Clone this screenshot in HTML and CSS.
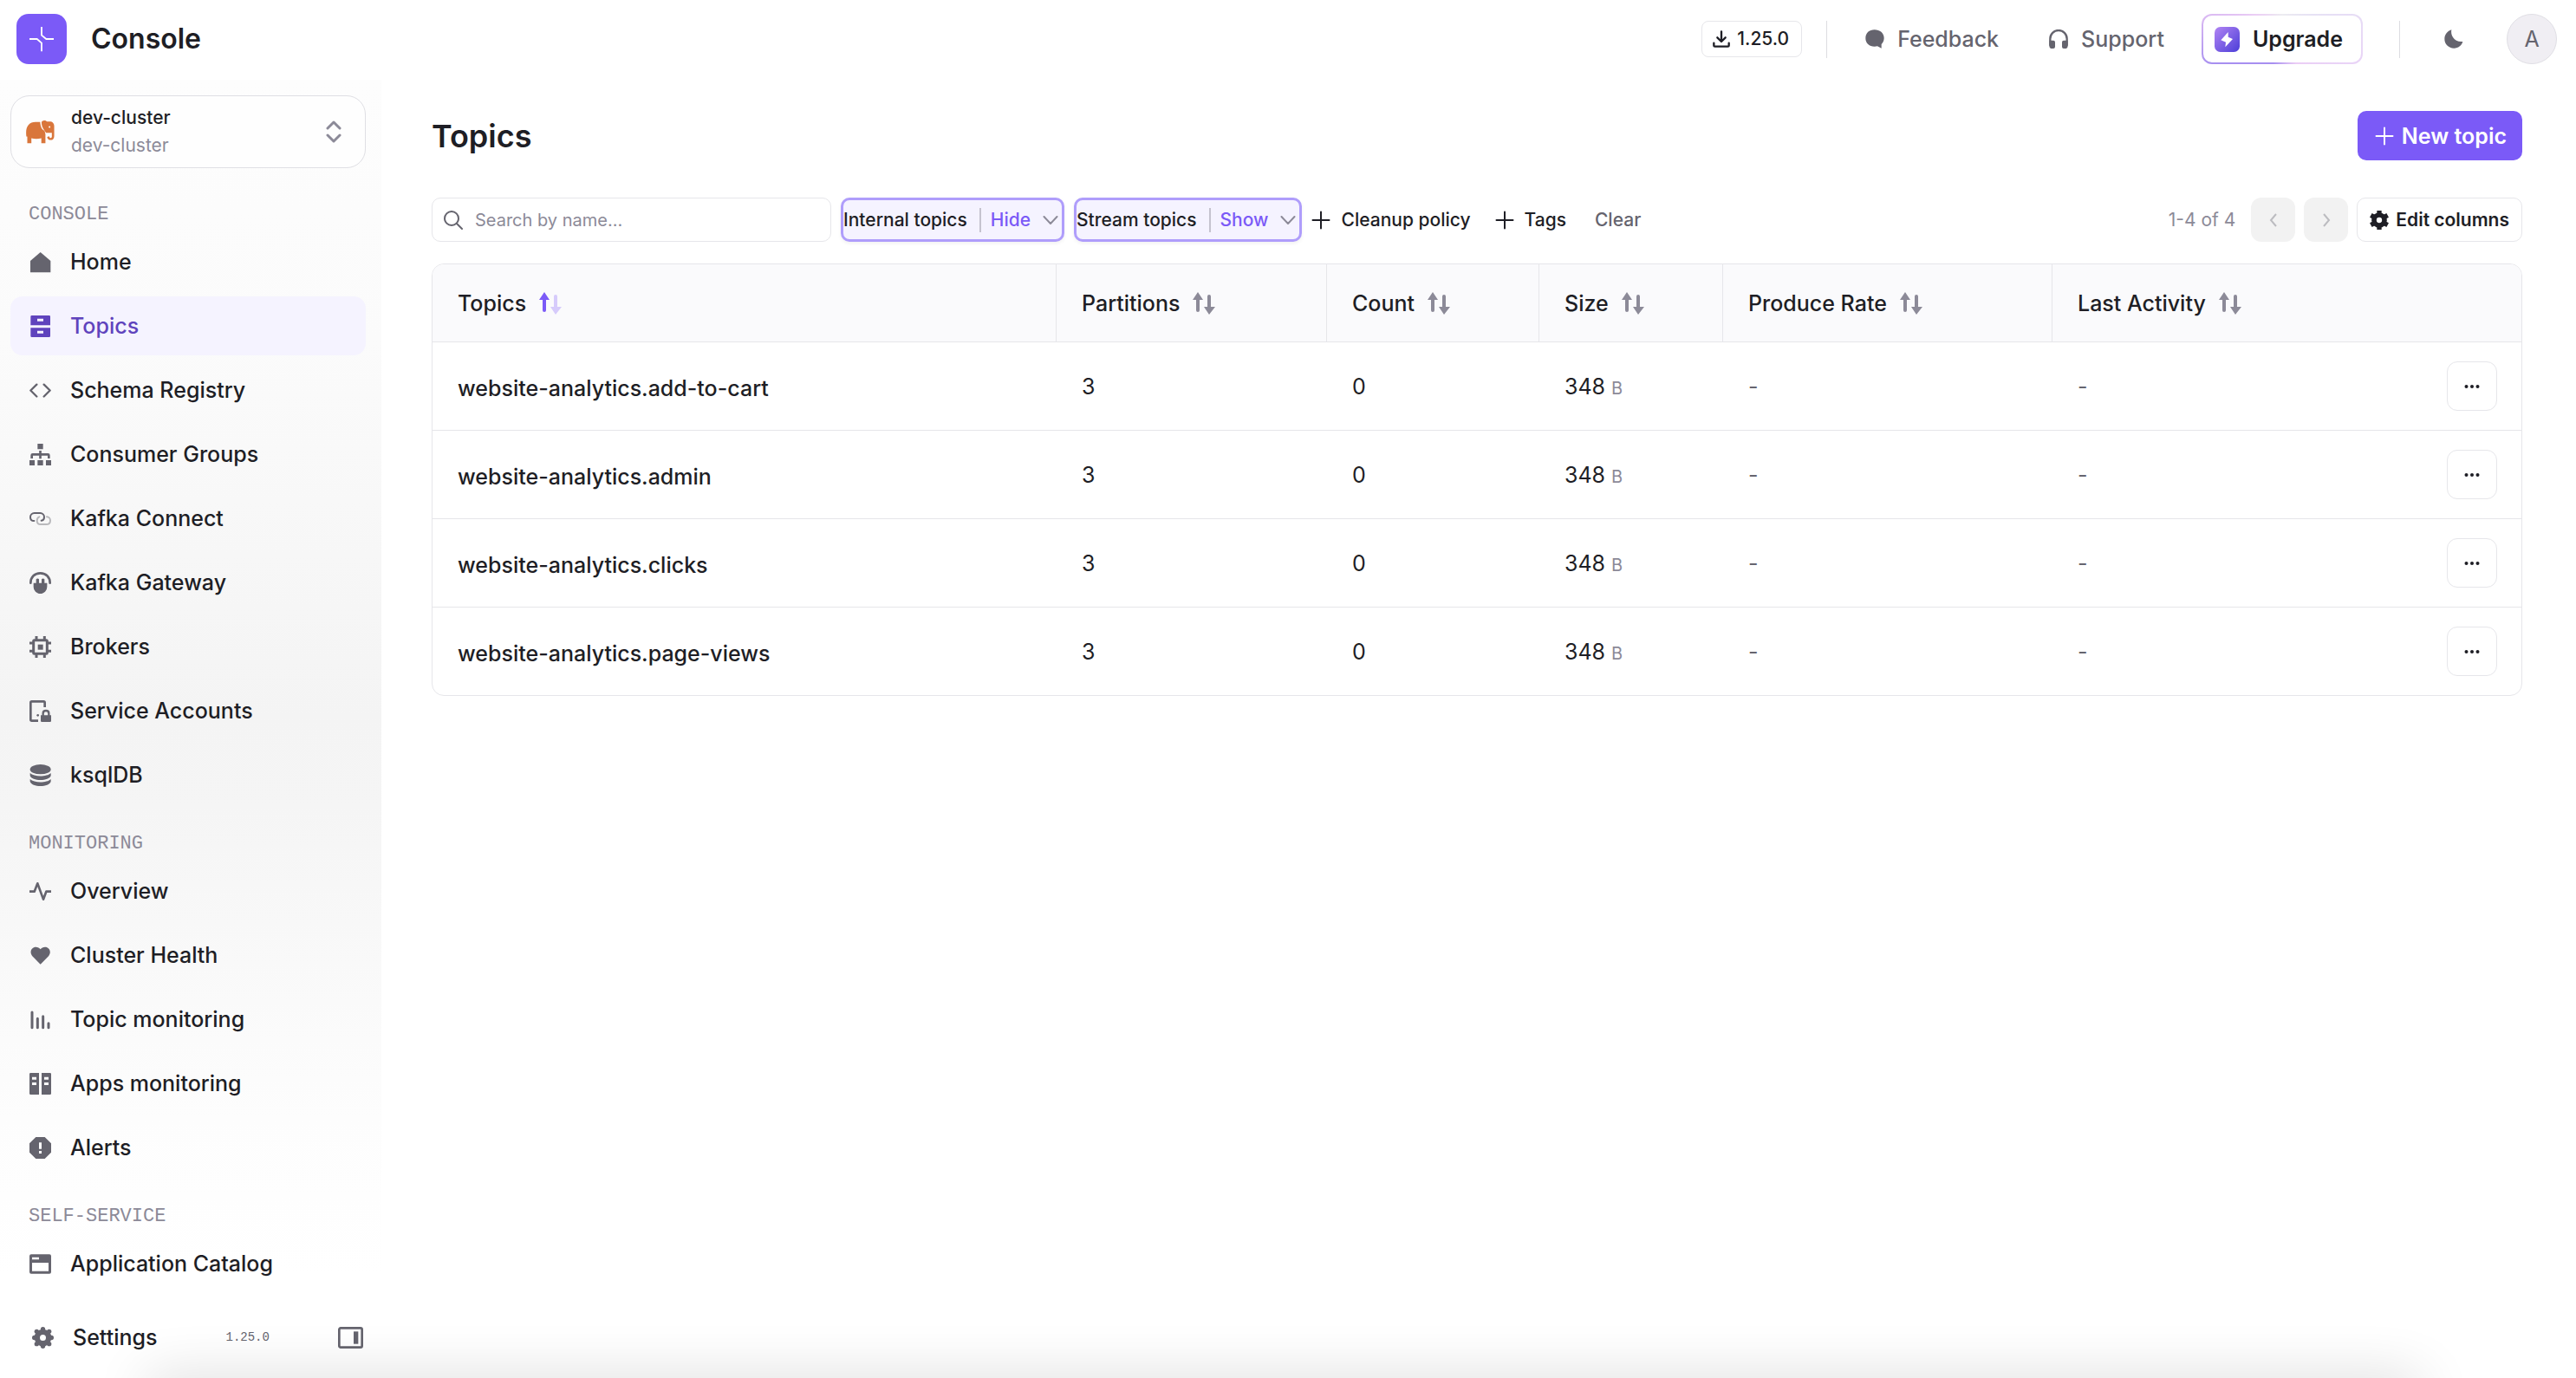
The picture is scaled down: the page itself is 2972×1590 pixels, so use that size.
FILE: index.html
```
<!DOCTYPE html>
<html lang="en">
<head>
<meta charset="utf-8">
<meta name="viewport" content="width=device-width, initial-scale=1">
<title>Topics - Console</title>
<link rel="stylesheet" href="styles.css">
</head>
<body>
<svg class="sprite" aria-hidden="true">
  <symbol id="sort" viewBox="0 0 26 26">
    <path class="sort-up" d="M6 0 L12 9 H8 V21 a2 2 0 0 1-4 0 V9 H0 Z"/>
    <path class="sort-down" d="M19 26 L13 17 H17 V5 a2 2 0 0 1 4 0 V17 H26 Z"/>
  </symbol>
  <symbol id="plus" viewBox="0 0 22 22"><path d="M11 1.500v19M1.500 11h19" fill="none" stroke="currentColor" stroke-width="2" stroke-linecap="round"/></symbol>
  <symbol id="chevron" viewBox="0 0 18 12"><path d="M1.500 2 9 10l7.500-8" fill="none" stroke="currentColor" stroke-width="2" stroke-linecap="round" stroke-linejoin="round"/></symbol>
  <symbol id="dots" viewBox="0 0 18 6"><circle cx="2.500" cy="3" r="2"/><circle cx="9" cy="3" r="2"/><circle cx="15.500" cy="3" r="2"/></symbol>
</svg>

<header class="topbar">
  <a class="brand" href="#">
    <svg class="logo" viewBox="0 0 174 174" aria-hidden="true"><rect width="174" height="174" rx="42" fill="#7b5af7"/><path d="M87 45v29l16 13h26M45 87h26l16 14v29" fill="none" stroke="#fff" stroke-width="5.500"/></svg>
    <span class="brand-name">Console</span>
  </a>
  <div class="topbar-actions">
    <button class="version-button" type="button"><svg class="icon-20" viewBox="0 0 60 60" aria-hidden="true"><path d="M30 4v34M16 25l14 14 14-14M4 44v8q0 4 4 4h44q4 0 4-4v-8" fill="none" stroke="currentColor" stroke-width="7" stroke-linecap="round" stroke-linejoin="round"/></svg>1.25.0</button>
    <span class="divider"></span>
    <nav class="help">
      <a class="help-link" href="#"><svg class="icon-22" viewBox="0 0 66 66" aria-hidden="true"><path d="M32 1C50 1 65 12 65 30c0 10-5 17-9 21v14L42 58c-3 1-6 1-10 1C14 59 1 48 1 30S14 1 32 1z"/></svg>Feedback</a>
      <a class="help-link" href="#"><svg class="icon-22" viewBox="0 0 66 66" aria-hidden="true"><path d="M4 56V32a29 29 0 0 1 58 0v24" fill="none" stroke="currentColor" stroke-width="7"/><path d="M1 38h14q6 0 6 6v16q0 6-6 6h-4Q1 66 1 56zM65 38H51q-6 0-6 6v16q0 6 6 6h4q10 0 10-10z"/></svg>Support</a>
    </nav>
    <button class="upgrade" type="button"><svg class="icon-29" viewBox="0 0 87 87" aria-hidden="true"><defs><linearGradient id="bolt" x1="0" y1="0" x2="1" y2="1"><stop offset="0" stop-color="#b184f3"/><stop offset="1" stop-color="#4c3ed8"/></linearGradient></defs><rect width="87" height="87" rx="20" fill="url(#bolt)"/><path d="M47 18 22 46l17 7-2 17 26-28-16-7z" fill="#fff"/></svg>Upgrade</button>
    <span class="divider"></span>
    <button class="theme" type="button" aria-label="Dark mode"><svg class="icon-22" viewBox="0 0 66 66" aria-hidden="true"><path d="M25 1C21 20 34 45 64 42 60 56 48 65 34 65 15 65 1 51 1 33 1 18 11 5 25 1z"/></svg></button>
    <button class="avatar" type="button">A</button>
  </div>
</header>

<div class="shell">
  <aside class="sidebar">
    <button class="cluster" type="button">
      <svg class="elephant" viewBox="0 0 97 80" aria-hidden="true"><path fill="#d9763b" d="M0 42C0 18 12 5 32 5h16c1 14 5 27 15 30l3 12v31H52V61c-10 3-24 3-34 0v17H4V54q-4 6-4-12z"/><path fill="#d9763b" d="M53 5c3-6 14-7 18-1h10c9 0 15 6 15 15v34c0 9-5 14-12 14s-12-5-12-11l7-2c1 4 3 6 5 6s4-2 4-5V42H68L62 33C56 26 52 16 53 5z"/><circle cx="80" cy="22" r="3" fill="#fff"/></svg>
      <span class="cluster-text"><span class="cluster-name">dev-cluster</span><span class="cluster-id">dev-cluster</span></span>
      <svg class="cluster-arrows" viewBox="0 0 18 26" aria-hidden="true"><path d="M2 9l7-7 7 7M2 17l7 7 7-7" fill="none" stroke="currentColor" stroke-width="3" stroke-linecap="round" stroke-linejoin="round"/></svg>
    </button>

    <nav class="menu">
      <section class="menu-group">
        <h2 class="menu-label">CONSOLE</h2>
        <ul class="menu-list">
          <li><a class="menu-item" href="#"><svg class="icon-25" viewBox="0 0 75 75" aria-hidden="true"><path d="M38 3 73 33v40H3V33z"/></svg>Home</a></li>
          <li><a class="menu-item active" href="#" aria-current="page"><svg class="icon-25" viewBox="0 0 75 75" aria-hidden="true"><path fill-rule="evenodd" d="M8 0h60q4 0 4 4v30H4V4q0-4 4-4zM27 11v9h21v-9zM4 43h68v28q0 4-4 4H8q-4 0-4-4zM27 53v9h21v-9z"/></svg>Topics</a></li>
          <li><a class="menu-item" href="#"><svg class="icon-25" viewBox="0 0 75 75" aria-hidden="true"><path d="M25 17 4 37.500l21 21M50 17l21 20.500-21 21" fill="none" stroke="currentColor" stroke-width="7" stroke-linecap="round" stroke-linejoin="round"/></svg>Schema Registry</a></li>
          <li><a class="menu-item" href="#"><svg class="icon-25" viewBox="0 0 75 75" aria-hidden="true"><path d="M28 0h19v19H28zM0 57h18v18H0zM28 57h19v18H28zM57 57h18v18H57z"/><path d="M37.500 24v28M8 51V40q0-3 3-3h53q3 0 3 3v11" fill="none" stroke="currentColor" stroke-width="8"/></svg>Consumer Groups</a></li>
          <li><a class="menu-item" href="#"><svg class="icon-25" viewBox="0 0 75 75" aria-hidden="true"><g fill="none" stroke-width="6" stroke-linecap="round"><path d="M34 31c-5 2-8 7-8 13 0 8 5 13 13 13h19c8 0 14-5 14-13 0-7-5-13-12-13" stroke="#b9b9bc"/><path d="M16 45C8 45 3 40 3 32s6-14 14-14h20c8 0 14 6 14 14 0 6-4 11-10 12" stroke="currentColor"/></g></svg>Kafka Connect</a></li>
          <li><a class="menu-item" href="#"><svg class="icon-25" viewBox="0 0 75 75" aria-hidden="true"><path d="M4 38C4 18 17 4 37.500 4S71 18 71 38" fill="none" stroke="currentColor" stroke-width="8" stroke-linecap="round"/><path d="M14 38h9V25q5-5 10 0v13h9V25q5-5 10 0v13h9v14a23 23 0 0 1-47 0z"/></svg>Kafka Gateway</a></li>
          <li><a class="menu-item" href="#"><svg class="icon-25" viewBox="0 0 75 75" aria-hidden="true"><rect x="14" y="14" width="47" height="47" rx="3" fill="none" stroke="currentColor" stroke-width="9"/><path d="M29 29h18v18H29z"/><path d="M24 0v14M52 0v14M24 61v14M52 61v14M0 24h14M0 52h14M61 24h14M61 52h14" stroke="currentColor" stroke-width="9"/></svg>Brokers</a></li>
          <li><a class="menu-item" href="#"><svg class="icon-25" viewBox="0 0 75 75" aria-hidden="true"><path d="M30 71H8q-4 0-4-4V8q0-4 4-4h41q4 0 4 4v16" fill="none" stroke="currentColor" stroke-width="8"/><circle cx="29" cy="52" r="4"/><path d="M39 52h36v19q0 4-4 4H43q-4 0-4-4z"/><path d="M47 54v-9q0-9 10-9t10 9v9" fill="none" stroke="currentColor" stroke-width="7"/></svg>Service Accounts</a></li>
          <li><a class="menu-item" href="#"><svg class="icon-25" viewBox="0 0 75 75" aria-hidden="true"><ellipse cx="38" cy="17" rx="36" ry="17"/><path d="M2 30c14 14 58 14 72 0v9c-6 20-66 20-72 0zM2 51c14 14 58 14 72 0v8c-6 21-66 21-72 0z"/></svg>ksqlDB</a></li>
        </ul>
      </section>
      <section class="menu-group">
        <h2 class="menu-label">MONITORING</h2>
        <ul class="menu-list">
          <li><a class="menu-item" href="#"><svg class="icon-25" viewBox="0 0 75 75" aria-hidden="true"><path d="M0 38h17L28 10l20 55 10-27h17" fill="none" stroke="currentColor" stroke-width="8" stroke-linejoin="round"/></svg>Overview</a></li>
          <li><a class="menu-item" href="#"><svg class="icon-25" viewBox="0 0 75 75" aria-hidden="true"><path d="M38 68 10 40C-2 24 8 8 22 8c7 0 12 3 16 8 4-5 9-8 16-8 14 0 24 16 12 32z"/></svg>Cluster Health</a></li>
          <li><a class="menu-item" href="#"><svg class="icon-25" viewBox="0 0 75 75" aria-hidden="true"><path d="M9 12v53M28 34v31M47 26v39M66 50v15" fill="none" stroke="currentColor" stroke-width="9" stroke-linecap="round"/></svg>Topic monitoring</a></li>
          <li><a class="menu-item" href="#"><svg class="icon-25" viewBox="0 0 75 75" aria-hidden="true"><path fill-rule="evenodd" d="M4 0h29v75H4q-4 0-4-4V4q0-4 4-4zM9 14v9h15v-9zM9 33v9h15v-9zM42 0h29q4 0 4 4v67q0 4-4 4H42zM51 14v9h15v-9zM51 33v9h15v-9z"/></svg>Apps monitoring</a></li>
          <li><a class="menu-item" href="#"><svg class="icon-25" viewBox="0 0 75 75" aria-hidden="true"><path fill-rule="evenodd" d="M22 0h31l22 22v31L53 75H22L0 53V22zM33 19v22h9V19zM33 48v9h9v-9z"/></svg>Alerts</a></li>
        </ul>
      </section>
      <section class="menu-group">
        <h2 class="menu-label">SELF-SERVICE</h2>
        <ul class="menu-list">
          <li><a class="menu-item" href="#"><svg class="icon-25" viewBox="0 0 75 75" aria-hidden="true"><path fill-rule="evenodd" d="M6 4h63q6 0 6 6v55q0 6-6 6H6q-6 0-6-6V10q0-6 6-6zM9 14v8h24v-8zM9 33v29h57V33z"/></svg>Application Catalog</a></li>
        </ul>
      </section>
    </nav>

    <footer class="sidebar-footer">
      <a class="settings" href="#"><svg class="icon-25" viewBox="0 0 75 75" aria-hidden="true"><circle cx="37.500" cy="37.500" r="20" fill="none" stroke="currentColor" stroke-width="19"/><g><circle cx="37.500" cy="8" r="8"/><circle cx="37.500" cy="67" r="8"/><circle cx="8" cy="37.500" r="8"/><circle cx="67" cy="37.500" r="8"/><circle cx="16" cy="16" r="8"/><circle cx="59" cy="16" r="8"/><circle cx="16" cy="59" r="8"/><circle cx="59" cy="59" r="8"/></g></svg>Settings</a>
      <span class="build">1.25.0</span>
      <button class="collapse" type="button" aria-label="Collapse sidebar"><svg viewBox="0 0 87 75" aria-hidden="true"><rect x="4" y="4" width="79" height="67" rx="5" fill="none" stroke="currentColor" stroke-width="8"/><path d="M54 16h16v43H54z"/></svg></button>
    </footer>
  </aside>

  <main class="content">
    <div class="title-row">
      <h1 class="title">Topics</h1>
      <button class="new-topic" type="button"><svg class="icon-22" aria-hidden="true"><use href="#plus"/></svg>New topic</button>
    </div>

    <div class="toolbar">
      <div class="filters">
        <label class="search">
          <svg class="icon-22" viewBox="0 0 22 22" aria-hidden="true"><g fill="none" stroke="currentColor" stroke-width="2" stroke-linecap="round"><circle cx="9" cy="9" r="8"/><path d="M15 15l6 6"/></g></svg>
          <input class="search-input" type="text" placeholder="Search by name..." aria-label="Search by name">
        </label>
        <div class="chip">
          <label class="chip-label" for="internal">Internal topics</label>
          <select class="chip-select" id="internal"><option selected>Hide</option><option>Show</option></select>
          <svg class="chip-arrow" aria-hidden="true"><use href="#chevron"/></svg>
        </div>
        <div class="chip">
          <label class="chip-label" for="stream">Stream topics</label>
          <select class="chip-select" id="stream"><option>Hide</option><option selected>Show</option></select>
          <svg class="chip-arrow" aria-hidden="true"><use href="#chevron"/></svg>
        </div>
        <div class="filter-buttons">
          <button class="plain-button" type="button"><svg class="icon-22" aria-hidden="true"><use href="#plus"/></svg>Cleanup policy</button>
          <button class="plain-button" type="button"><svg class="icon-22" aria-hidden="true"><use href="#plus"/></svg>Tags</button>
          <button class="plain-button clear" type="button">Clear</button>
        </div>
      </div>
      <div class="paging">
        <span class="range">1-4 of 4</span>
        <button class="page-button" type="button" disabled aria-label="Previous page"><svg viewBox="0 0 10 18" aria-hidden="true"><path d="M8 2 2 9l6 7" fill="none" stroke="currentColor" stroke-width="2"/></svg></button>
        <button class="page-button" type="button" disabled aria-label="Next page"><svg viewBox="0 0 10 18" aria-hidden="true"><path d="M2 2l6 7-6 7" fill="none" stroke="currentColor" stroke-width="2"/></svg></button>
        <button class="edit-columns" type="button"><svg class="icon-22" viewBox="0 0 66 66" aria-hidden="true"><circle cx="33" cy="33" r="18" fill="none" stroke="currentColor" stroke-width="17"/><path d="M33 0v20M33 66V46M4 16l18 10M62 50 44 40M4 50l18-10M62 16 44 26" fill="none" stroke="currentColor" stroke-width="16"/></svg>Edit columns</button>
      </div>
    </div>

    <div class="table-card">
      <table class="topics">
        <colgroup><col class="col-name"><col class="col-partitions"><col class="col-count"><col class="col-size"><col class="col-rate"><col class="col-activity"><col class="col-menu"></colgroup>
        <thead>
          <tr>
            <th scope="col"><button class="sort sorted" type="button">Topics<svg class="icon-26" aria-hidden="true"><use href="#sort"/></svg></button></th>
            <th scope="col"><button class="sort" type="button">Partitions<svg class="icon-26" aria-hidden="true"><use href="#sort"/></svg></button></th>
            <th scope="col"><button class="sort" type="button">Count<svg class="icon-26" aria-hidden="true"><use href="#sort"/></svg></button></th>
            <th scope="col"><button class="sort" type="button">Size<svg class="icon-26" aria-hidden="true"><use href="#sort"/></svg></button></th>
            <th scope="col"><button class="sort" type="button">Produce Rate<svg class="icon-26" aria-hidden="true"><use href="#sort"/></svg></button></th>
            <th scope="col" colspan="2"><button class="sort" type="button">Last Activity<svg class="icon-26" aria-hidden="true"><use href="#sort"/></svg></button></th>
          </tr>
        </thead>
        <tbody>
          <tr><td class="name-cell"><a href="#">website-analytics.add-to-cart</a></td><td>3</td><td>0</td><td>348 <span class="unit">B</span></td><td class="none">-</td><td class="none">-</td><td class="menu-cell"><button class="row-menu" type="button" aria-label="Actions"><svg aria-hidden="true"><use href="#dots"/></svg></button></td></tr>
          <tr><td class="name-cell"><a href="#">website-analytics.admin</a></td><td>3</td><td>0</td><td>348 <span class="unit">B</span></td><td class="none">-</td><td class="none">-</td><td class="menu-cell"><button class="row-menu" type="button" aria-label="Actions"><svg aria-hidden="true"><use href="#dots"/></svg></button></td></tr>
          <tr><td class="name-cell"><a href="#">website-analytics.clicks</a></td><td>3</td><td>0</td><td>348 <span class="unit">B</span></td><td class="none">-</td><td class="none">-</td><td class="menu-cell"><button class="row-menu" type="button" aria-label="Actions"><svg aria-hidden="true"><use href="#dots"/></svg></button></td></tr>
          <tr><td class="name-cell"><a href="#">website-analytics.page-views</a></td><td>3</td><td>0</td><td>348 <span class="unit">B</span></td><td class="none">-</td><td class="none">-</td><td class="menu-cell"><button class="row-menu" type="button" aria-label="Actions"><svg aria-hidden="true"><use href="#dots"/></svg></button></td></tr>
        </tbody>
      </table>
    </div>
  </main>
</div>
<div class="bottom-shade"></div>
</body>
</html>
```
FILE: styles.css
```
:root {
  --ink: #1e1e25;
  --muted: #65646e;
  --faint: #8c8a98;
  --line: #e6e6ea;
  --accent: #7b5af7;
}
* { box-sizing: border-box; }
body {
  margin: 0;
  min-height: 100vh;
  display: flex;
  flex-direction: column;
  overflow-x: hidden;
  background: #fff;
  color: var(--ink);
  font: 500 25px/32px Inter, "Liberation Sans", sans-serif;
}
button, input, select { font: inherit; color: inherit; }
button { margin: 0; padding: 0; border: 0; background: none; display: inline-flex; align-items: center; white-space: nowrap; }
a { color: inherit; text-decoration: none; }
svg { display: block; flex: none; fill: currentColor; }
.sprite { position: absolute; width: 0; height: 0; }
.icon-20 { width: 20px; height: 20px; }
.icon-22 { width: 22px; height: 22px; }
.icon-25 { width: 25px; height: 25px; }
.icon-26 { width: 26px; height: 26px; }
.icon-29 { width: 29px; height: 29px; }

/* Top bar */
.topbar { display: flex; align-items: center; justify-content: space-between; height: 92px; padding: 0 22px 2px 19px; }
.brand { display: flex; align-items: center; gap: 28px; }
.logo { width: 58px; height: 58px; }
.brand-name { font-size: 32px; font-weight: 600; }
.topbar-actions { display: flex; align-items: center; }
.version-button { height: 42px; padding: 0 14px 0 12px; gap: 8px; border: 1px solid var(--line); border-radius: 8px; font-size: 21px; }
.divider { width: 1px; height: 43px; margin-left: 28px; background: #dddde1; }
.help { display: flex; gap: 58px; margin: 0 43px 0 44px; color: var(--muted); }
.help-link { display: flex; align-items: center; gap: 15px; }
.upgrade {
  height: 58px;
  padding: 0 21px 0 13px;
  gap: 15px;
  border: 2px solid transparent;
  border-radius: 12px;
  background: linear-gradient(#fff, #fff) padding-box, conic-gradient(from 0deg at 50% 50%, #ececf0, #e6e0f5 60deg, #e9d3f7 110deg, #ebcdf5 150deg, #a78ff0 200deg, #a78ff0 250deg, #d9b8f2 285deg, #ebcdf5 310deg, #ececf0) border-box;
  font-weight: 600;
}
.upgrade + .divider { margin-left: 42px; }
.theme { margin-left: 51px; color: var(--muted); }
.avatar { justify-content: center; width: 58px; height: 58px; margin-left: 50px; border: 1px solid #e0dfe5; border-radius: 50%; background: #f0eef3; color: var(--muted); font-weight: 400; }

/* Sidebar */
.shell { display: flex; flex: 1; }
.sidebar {
  display: flex;
  flex-direction: column;
  width: 440px;
  flex: none;
  padding: 18px 18px 21px 12px;
  background: linear-gradient(#fdfdfd, #fbfbfb 20%, #f4f4f4 49%, #f5f5f5 56%, #fdfdfd 80%, #fff 92%);
}
.cluster { height: 84px; padding: 0 27px 0 17px; border: 1px solid #dfdfe4; border-radius: 22px; background: #fefefe; text-align: left; font-size: 21px; }
.elephant { width: 33px; height: 27px; }
.cluster-text { display: flex; flex: 1; flex-direction: column; margin-left: 19px; }
.cluster-id { color: var(--faint); font-weight: 400; }
.cluster-arrows { width: 18px; height: 26px; color: var(--faint); }
.menu { display: flex; flex-direction: column; gap: 34px; margin-top: 42px; }
.menu-label { margin: 0 0 8px 21px; color: var(--faint); font: 400 22px/24px "Liberation Mono", monospace; }
.menu-list { display: flex; flex-direction: column; gap: 6px; margin: 0; padding: 0; list-style: none; }
.menu-item { display: flex; align-items: center; gap: 22px; height: 68px; padding: 0 22px; border-radius: 14px; }
.menu-item svg, .settings svg { color: var(--muted); }
.menu-item.active { background: #f5f3ff; color: #5f43bd; }
.menu-item.active svg { color: inherit; }
.sidebar-footer { display: flex; align-items: center; justify-content: space-between; margin-top: auto; padding: 0 3px 10px 25px; }
.settings { display: flex; align-items: center; gap: 22px; }
.build { color: var(--muted); font: 400 14px/20px "Liberation Mono", monospace; }
.collapse { color: var(--muted); }
.collapse svg { width: 29px; height: 25px; }

/* Content */
.content { flex: 1; min-width: 0; padding: 36px 62px 60px 58px; }
.title-row { display: flex; align-items: center; justify-content: space-between; }
.title { margin: 0; font-size: 36px; font-weight: 600; line-height: 44px; }
.new-topic { height: 57px; padding: 0 18px 0 20px; gap: 9px; border-radius: 10px; background: var(--accent); color: #fff; font-weight: 600; }
.toolbar { display: flex; align-items: center; justify-content: space-between; margin-top: 43px; font-size: 21px; }
.filters { display: flex; align-items: center; gap: 11px; }
.search { display: flex; align-items: center; gap: 14px; width: 461px; height: 51px; padding: 0 13px; border: 1px solid var(--line); border-radius: 10px; color: var(--muted); }
.search-input { flex: 1; min-width: 0; padding: 0; border: 0; outline: 0; background: none; font-size: 20px; font-weight: 400; }
.search-input::placeholder { color: #8c8a98; opacity: 1; }
.chip { display: flex; align-items: center; height: 51px; padding-right: 4px; border: 3px solid #af9dfb; border-radius: 10px; background: #f5f3ff; box-shadow: 0 2px 4px rgba(0, 0, 0, .06); }
.chip-label { padding-right: 14px; border-right: 2px solid #c5c3cf; line-height: 28px; white-space: nowrap; }
.chip-select { appearance: none; field-sizing: content; padding: 0; margin-left: 11px; border: 0; background: none; color: var(--accent); }
.chip-arrow { width: 18px; height: 12px; margin-left: 14px; color: var(--faint); pointer-events: none; }
.filter-buttons { display: flex; gap: 28px; }
.plain-button { gap: 12px; }
.clear { margin-left: 5px; color: var(--muted); }
.paging { display: flex; align-items: center; gap: 10px; }
.range { margin-right: 8px; color: var(--faint); font-weight: 400; }
.page-button { justify-content: center; width: 51px; height: 51px; border-radius: 12px; background: #f2f2f2; color: #bcbcc0; }
.page-button svg { width: 10px; height: 18px; }
.edit-columns { height: 51px; padding: 0 14px; gap: 8px; border: 1px solid var(--line); border-radius: 10px; font-weight: 600; }

/* Table */
.table-card { margin-top: 25px; border: 1px solid var(--line); border-radius: 14px; overflow: hidden; }
.topics { width: 100%; table-layout: fixed; border-collapse: separate; border-spacing: 0; }
.col-name { width: 720px; }
.col-partitions { width: 312px; }
.col-count { width: 245px; }
.col-size { width: 212px; }
.col-rate { width: 380px; }
.col-menu { width: 120px; }
.topics th { height: 89px; padding: 0 0 0 29px; border-right: 1px solid var(--line); background: #fafafc; font-weight: 500; text-align: left; }
.topics th:last-child { border-right: 0; }
.topics td { height: 102px; padding: 0 0 0 29px; border-top: 1px solid var(--line); font-weight: 400; }
.topics .name-cell { padding-top: 4px; font-weight: 500; }
.sort { gap: 15px; color: var(--ink); }
.sort svg { color: var(--faint); }
.sorted svg { fill: var(--accent); --down: #d6cbfb; }
.sort-down { fill: var(--down, currentColor); }
.unit { color: var(--faint); font-size: 20px; line-height: 20px; }
.topics .none { color: var(--muted); }
.topics .menu-cell { padding: 0 28px 0 0; }
.row-menu { display: flex; justify-content: center; width: 58px; height: 57px; margin-left: auto; border: 1px solid var(--line); border-radius: 12px; }
.row-menu svg { width: 18px; height: 6px; }

/* Soft shade along the window's lower edge */
.bottom-shade { position: fixed; right: 180px; bottom: -40px; left: 170px; height: 40px; box-shadow: 0 0 64px rgba(0, 0, 0, .16); pointer-events: none; }
```
